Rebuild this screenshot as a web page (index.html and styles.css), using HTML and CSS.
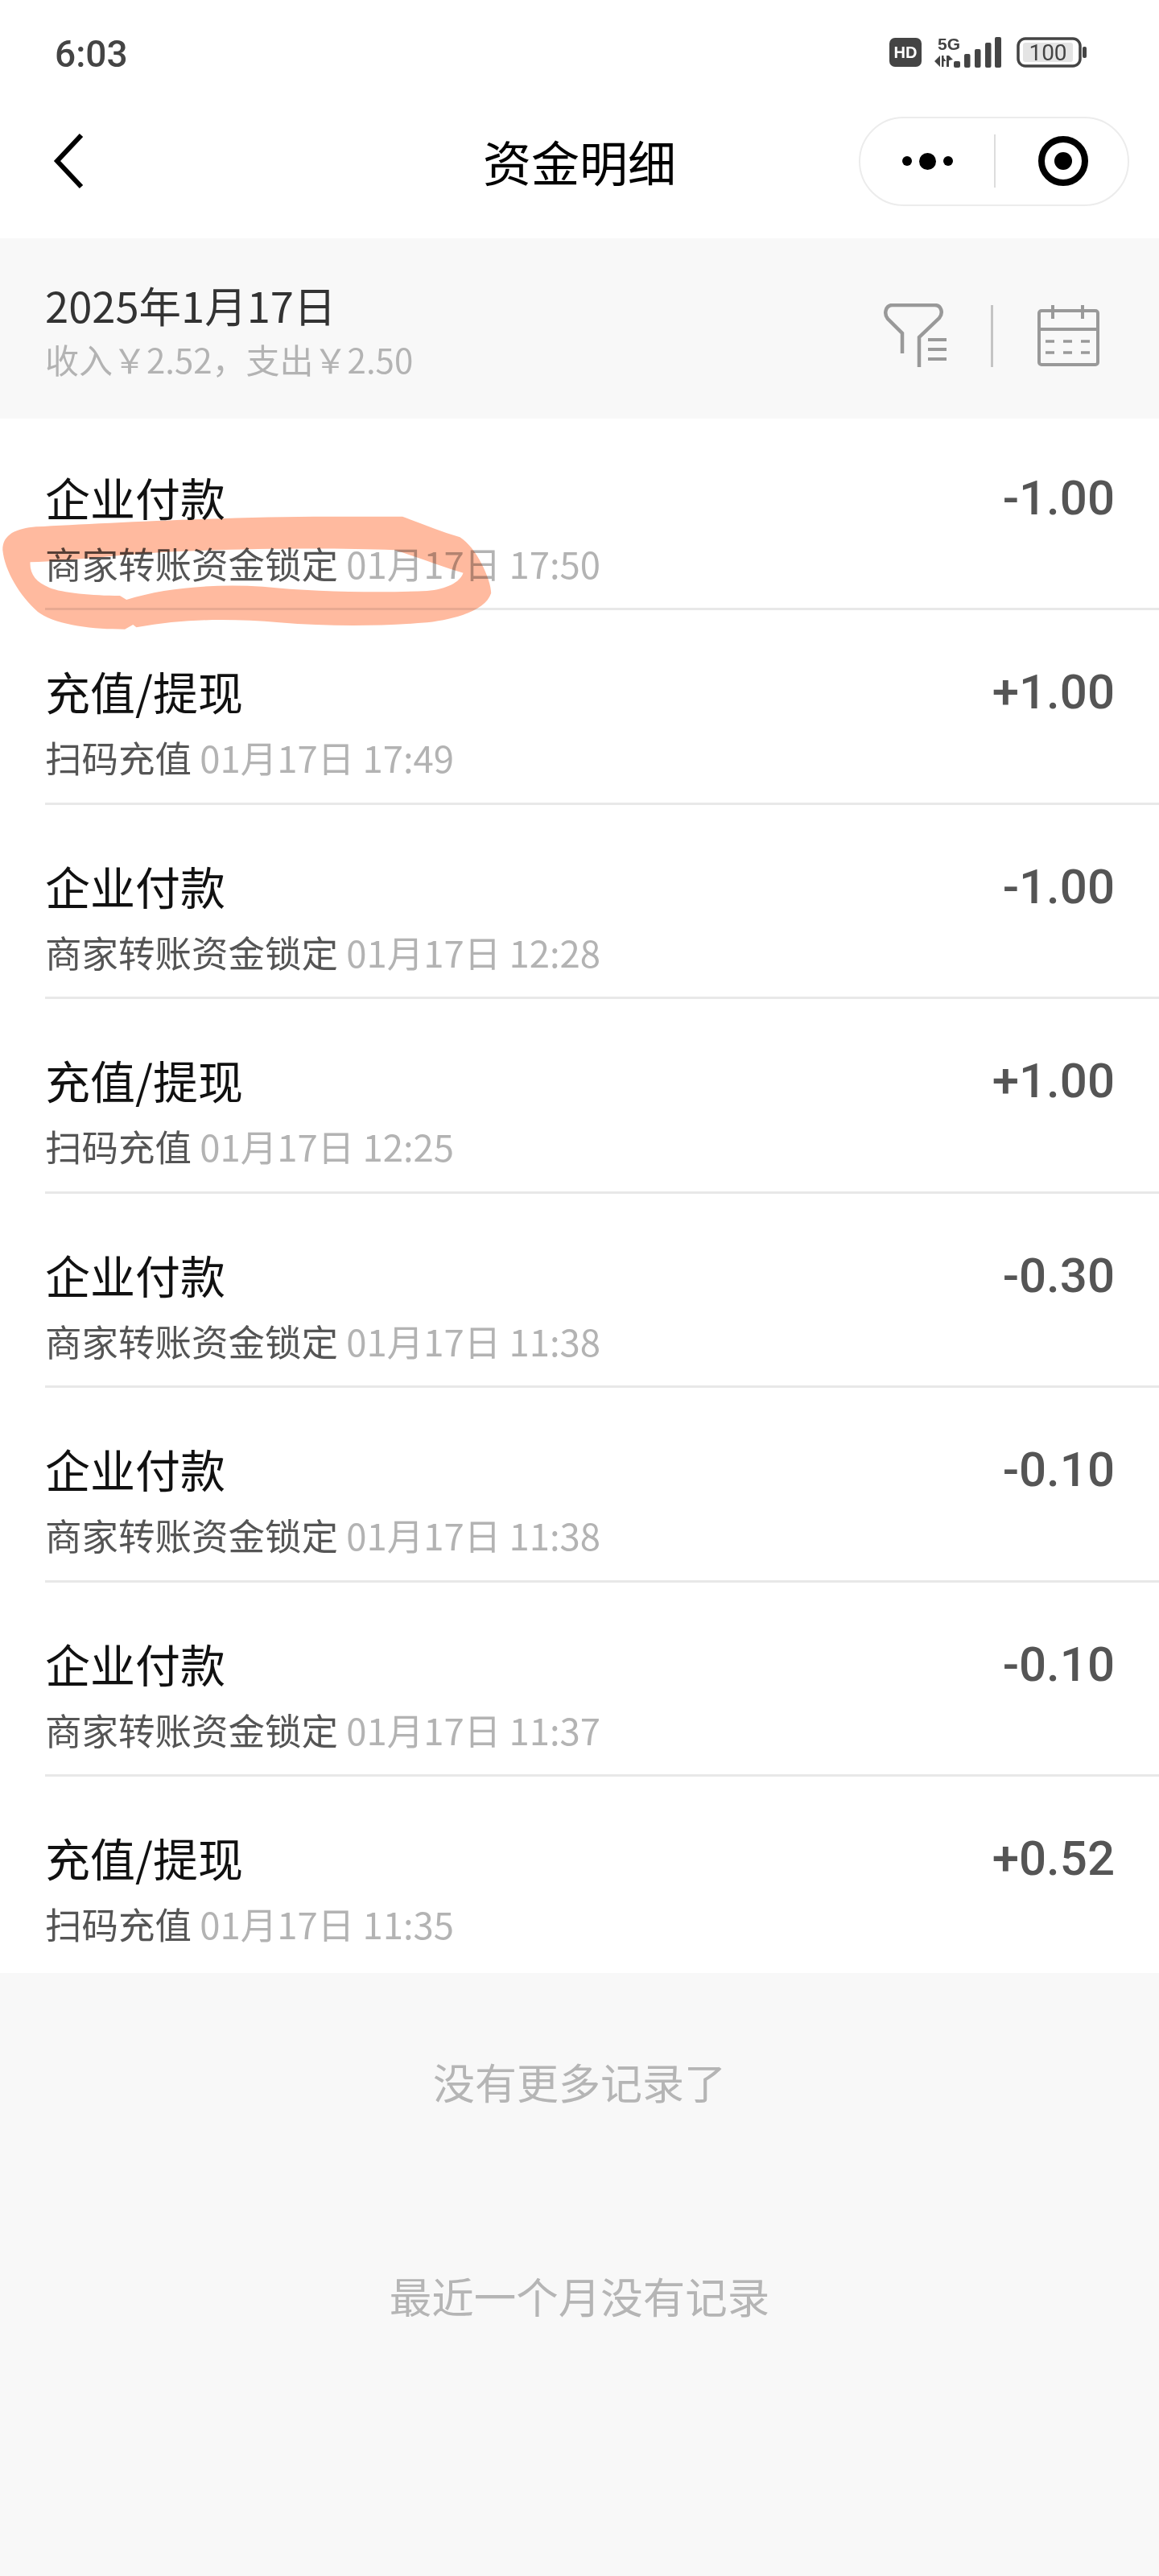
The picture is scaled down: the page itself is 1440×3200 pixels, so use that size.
FILE: index.html
```html
<!DOCTYPE html>
<html lang="zh-CN">
<head>
    <meta charset="UTF-8">
    <meta name="viewport" content="width=device-width, initial-scale=1.0">
    <title>资金明细</title>
    <link rel="stylesheet" href="styles.css">
</head>
<body>
    <div class="status-bar">
        <span class="status-time">6:03</span>
        <div class="status-icons">
            <svg class="icon-hd" viewBox="0 0 40 36">
                <rect width="40" height="36" rx="7" fill="#444"/>
                <text x="20" y="25" text-anchor="middle" font-family="Liberation Sans" font-weight="700" font-size="20" fill="#fff">HD</text>
            </svg>
            <svg class="icon-signal" viewBox="0 0 84 38">
                <text x="5" y="16" font-family="Liberation Sans" font-weight="700" font-size="21" fill="#444">5G</text>
                <path d="M8 23v14l-7-7zM10 23v14h2.500v-14zM12.500 26l3 4h-3zM16 23v14h3v-8l5-1-5-5z" fill="#444"/>
                <rect x="25" y="30" width="8" height="8" rx="2" fill="#444"/>
                <rect x="38" y="21" width="7.500" height="17" rx="2" fill="#444"/>
                <rect x="51" y="15" width="7.500" height="23" rx="2" fill="#444"/>
                <rect x="64" y="7" width="7.500" height="31" rx="2" fill="#444"/>
                <rect x="76" y="0" width="8" height="38" rx="2" fill="#444"/>
            </svg>
            <svg class="icon-battery" viewBox="0 0 87 38">
                <rect x="2" y="2" width="77" height="34" rx="9" fill="none" stroke="#444" stroke-width="3.500"/>
                <rect x="8" y="7" width="62" height="24" rx="3" fill="#e4e4e4"/>
                <text x="39" y="29" text-anchor="middle" font-family="Roboto" font-size="28" fill="#444">100</text>
                <rect x="82" y="12" width="5" height="14" rx="2" fill="#444"/>
            </svg>
        </div>
    </div>

    <div class="nav-bar">
        <svg class="nav-back" viewBox="0 0 40 70">
            <path d="M35 3 5 35l30 32" fill="none" stroke="#000" stroke-width="6"/>
        </svg>
        <h1 class="nav-title">资金明细</h1>
        <div class="capsule">
            <div class="capsule-more">
                <span class="dot"></span>
                <span class="dot dot-big"></span>
                <span class="dot"></span>
            </div>
            <span class="capsule-line"></span>
            <div class="capsule-target">
                <span class="target-core"></span>
            </div>
        </div>
    </div>

    <div class="summary">
        <div class="summary-text">
            <div class="summary-date">2025年1月17日</div>
            <div class="summary-total">收入￥2.52，支出￥2.50</div>
        </div>
        <div class="summary-tools">
            <svg class="tool-icon" viewBox="0 0 80 80">
                <path d="M24 62V37L6 19C1 13 3 2 12 2h52c9 0 11 10 6 16L45 42v37" fill="none" stroke="#999" stroke-width="4.500"/>
                <path d="M56 45h23M56 57h23M56 69h23" fill="none" stroke="#999" stroke-width="4"/>
            </svg>
            <span class="tool-line"></span>
            <svg class="tool-icon" viewBox="0 0 80 80">
                <rect x="3" y="9" width="73" height="67" rx="3" fill="none" stroke="#999" stroke-width="4"/>
                <path d="M20 2v17M57 2v17M3 32h73" fill="none" stroke="#999" stroke-width="4"/>
                <path d="M11 47h11M33 47h11M55 47h11M11 61h11M33 61h11M55 61h11" fill="none" stroke="#999" stroke-width="3.500"/>
            </svg>
        </div>
    </div>

    <div class="list">
        <div class="row">
            <div class="row-main"><span class="row-title">企业付款</span><span class="row-amount">-1.00</span></div>
            <div class="row-sub">商家转账资金锁定 <span class="row-time">01月17日 17:50</span></div>
        </div>
        <div class="row">
            <div class="row-main"><span class="row-title">充值/提现</span><span class="row-amount">+1.00</span></div>
            <div class="row-sub">扫码充值 <span class="row-time">01月17日 17:49</span></div>
        </div>
        <div class="row">
            <div class="row-main"><span class="row-title">企业付款</span><span class="row-amount">-1.00</span></div>
            <div class="row-sub">商家转账资金锁定 <span class="row-time">01月17日 12:28</span></div>
        </div>
        <div class="row">
            <div class="row-main"><span class="row-title">充值/提现</span><span class="row-amount">+1.00</span></div>
            <div class="row-sub">扫码充值 <span class="row-time">01月17日 12:25</span></div>
        </div>
        <div class="row">
            <div class="row-main"><span class="row-title">企业付款</span><span class="row-amount">-0.30</span></div>
            <div class="row-sub">商家转账资金锁定 <span class="row-time">01月17日 11:38</span></div>
        </div>
        <div class="row">
            <div class="row-main"><span class="row-title">企业付款</span><span class="row-amount">-0.10</span></div>
            <div class="row-sub">商家转账资金锁定 <span class="row-time">01月17日 11:38</span></div>
        </div>
        <div class="row">
            <div class="row-main"><span class="row-title">企业付款</span><span class="row-amount">-0.10</span></div>
            <div class="row-sub">商家转账资金锁定 <span class="row-time">01月17日 11:37</span></div>
        </div>
        <div class="row">
            <div class="row-main"><span class="row-title">充值/提现</span><span class="row-amount">+0.52</span></div>
            <div class="row-sub">扫码充值 <span class="row-time">01月17日 11:35</span></div>
        </div>
    </div>

    <div class="footer">
        <p class="footer-note">没有更多记录了</p>
        <p class="footer-note footer-month">最近一个月没有记录</p>
    </div>

    <!-- hand drawn marker over the first row -->
    <svg class="marker" viewBox="0 0 1568 720" preserveAspectRatio="none">
        <path fill-rule="evenodd" fill="#ffba9f" d="M8 370C8 310 50 290 110 283C300 270 700 245 1000 245L1225 245C1280 270 1340 300 1400 322C1450 360 1495 480 1495 530C1480 590 1400 625 1300 640C1150 655 1000 655 850 640C700 625 560 625 415 658L405 648L380 665C280 665 170 650 115 600C60 540 15 450 8 370Z M92 415C220 410 380 385 500 378C700 365 1000 360 1200 370C1270 395 1340 430 1410 455C1400 490 1360 515 1300 522C1150 530 950 525 800 506C650 495 500 510 385 555L365 540C280 540 190 530 150 510C110 490 90 460 92 415Z"/>
    </svg>
</body>
</html>
```

FILE: styles.css
```css
/* General */
html, body {
    margin: 0;
    padding: 0;
}

body {
    position: relative;
    width: 1440px;
    min-height: 3200px;
    background: #f8f8f8;
    font-family: "Noto Sans CJK SC", "Noto Sans", sans-serif;
    color: #111;
}

/* Status bar */
.status-bar {
    display: flex;
    justify-content: space-between;
    align-items: center;
    box-sizing: border-box;
    height: 100px;
    padding: 30px 90px 0 68px;
    background: #fff;
}

.status-time {
    margin-top: 4px;
    font-family: Roboto, sans-serif;
    font-size: 46px;
    font-weight: 500;
    line-height: 70px;
    color: #444;
}

.status-icons {
    display: flex;
    align-items: center;
    gap: 15px;
}

.icon-hd {
    width: 40px;
    height: 36px;
}

.icon-signal {
    width: 84px;
    height: 38px;
    overflow: visible;
}

.icon-battery {
    width: 87px;
    height: 38px;
    margin-left: 4px;
}

/* Navigation */
.nav-bar {
    display: grid;
    grid-template-columns: 1fr auto 1fr;
    align-items: center;
    box-sizing: border-box;
    height: 196px;
    padding: 4px 37px 0;
    background: #fff;
}

.nav-back {
    width: 40px;
    height: 70px;
    margin-left: 29px;
}

.nav-title {
    margin: 0;
    font-size: 60px;
    font-weight: 400;
    line-height: 80px;
    color: #000;
}

.capsule {
    justify-self: end;
    display: flex;
    align-items: center;
    box-sizing: border-box;
    width: 336px;
    height: 111px;
    border: 2px solid #ececec;
    border-radius: 56px;
    background: #fff;
}

.capsule-more {
    display: flex;
    justify-content: center;
    align-items: center;
    gap: 9px;
    width: 166px;
}

.dot {
    width: 12px;
    height: 12px;
    border-radius: 50%;
    background: #000;
}

.dot-big {
    width: 21px;
    height: 21px;
}

.capsule-line {
    width: 2px;
    height: 66px;
    background: #ddd;
}

.capsule-target {
    display: flex;
    justify-content: center;
    align-items: center;
    box-sizing: border-box;
    width: 62px;
    height: 62px;
    margin-left: 53px;
    border: 8px solid #000;
    border-radius: 50%;
}

.target-core {
    width: 22px;
    height: 22px;
    border-radius: 50%;
    background: #000;
}

/* Date summary */
.summary {
    display: flex;
    justify-content: space-between;
    align-items: center;
    box-sizing: border-box;
    height: 224px;
    padding: 0 72px 0 56px;
    background: #f8f8f8;
}

.summary-text {
    padding-top: 4px;
}

.summary-date {
    font-size: 52.500px;
    line-height: 70px;
    color: #333;
}

.summary-total {
    margin-top: 2px;
    font-size: 42px;
    line-height: 62px;
    color: #b3b3b3;
}

.summary-tools {
    display: flex;
    align-items: center;
    gap: 54px;
    margin-top: 18px;
}

.tool-icon {
    width: 80px;
    height: 80px;
}

.tool-line {
    width: 3px;
    height: 77px;
    background: #c4c4c4;
}

/* Rows */
.list {
    background: #fff;
}

.row {
    box-sizing: border-box;
    height: 241.500px;
    margin-left: 56px;
    padding: 65px 55px 0 0;
    border-bottom: 3px solid #e8e8e8;
}

.row:first-child {
    height: 238px;
    padding-top: 62px;
}

.row:last-child {
    height: 244px;
    border-bottom: none;
}

.row-main {
    display: flex;
    justify-content: space-between;
    align-items: center;
    height: 70px;
}

.row-title {
    font-size: 56px;
    line-height: 70px;
    color: #111;
}

.row-amount {
    margin-top: 4px;
    font-family: Roboto, sans-serif;
    font-size: 60px;
    font-weight: 500;
    line-height: 70px;
    color: #555;
}

.row-sub {
    margin-top: 17px;
    font-size: 45.500px;
    line-height: 60px;
    color: #555;
}

.row-time {
    color: #b3b3b3;
}

/* Footer notes */
.footer {
    text-align: center;
}

.footer-note {
    margin: 0;
    padding-top: 100px;
    font-size: 52px;
    line-height: 70px;
    color: #b5b5b5;
}

.footer-month {
    padding-top: 195px;
    font-size: 52.500px;
}

/* Marker scribble sits over the first row */
.marker {
    position: absolute;
    top: 560px;
    left: 0;
    width: 640px;
    height: 240px;
    mix-blend-mode: multiply;
}
```
